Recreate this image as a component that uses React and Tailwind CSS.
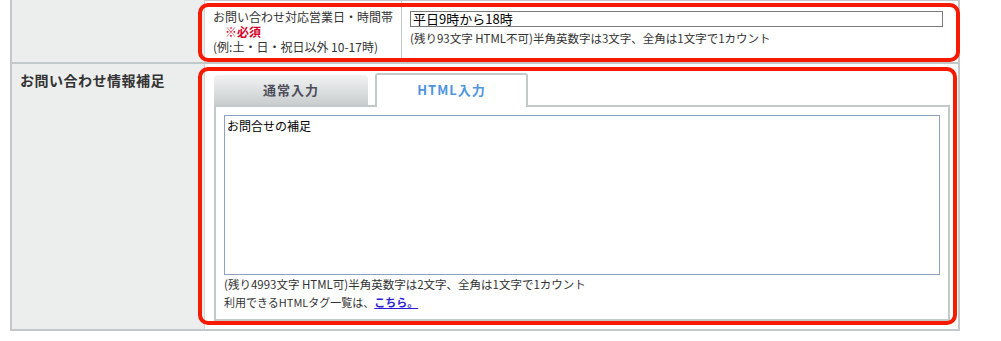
export default function App() {
  return (
    <div className="relative w-[1001px] h-[341px] bg-white overflow-hidden font-['Noto_Sans_CJK_JP','Noto_Sans',sans-serif] text-[#333]">
      <div className="ml-[10px] w-[950px] border-x-2 border-b-2 border-[#c3c9c9]">
        {/* Row 1 */}
        <div className="flex h-[64px] border-b-2 border-[#c3c9c9]">
          <div className="w-[193px] bg-[#eceeee] border-r border-[#d2d7d7]" />
          <div className="flex-1 flex border-t border-[#c3c9c9]">
            <div className="w-[197px] border-r border-[#c3c9c9] pl-[8px] pt-[8px] text-[12px] leading-[15px]">
              <div>お問い合わせ対応営業日・時間帯</div>
              <div className="pl-[12px] text-[#d4002a] font-bold">※必須</div>
              <div>(例:土・日・祝日以外 10-17時)</div>
            </div>
            <div className="flex-1 pl-[8px] pt-[10px]">
              <div className="w-[533px] h-[16px] border border-[#7a7a7a] text-[13px] leading-[14px] pl-[2px] text-black">
                平日9時から18時
              </div>
              <div className="mt-[4px] text-[11.5px] leading-[15px]">
                (残り93文字 HTML不可)半角英数字は3文字、全角は1文字で1カウント
              </div>
            </div>
          </div>
        </div>
        {/* Row 2 */}
        <div className="flex h-[265px]">
          <div className="w-[193px] bg-[#eceeee] border-r border-[#d2d7d7] pl-[8px] pt-[6px] text-[14px] leading-[20px] font-bold tracking-[0.5px]">
            お問い合わせ情報補足
          </div>
          <div className="flex-1 pl-[9px] pt-[9px]">
            <div className="flex items-end gap-[7px] h-[32px]">
              <div className="w-[154px] h-[30px] rounded-t-[4px] bg-gradient-to-b from-[#f2f4f4] to-[#c9cdcd] flex items-center justify-center text-[13px] font-bold tracking-[1px] text-[#4d4d5c]">
                通常入力
              </div>
              <div className="relative z-10 -mb-[2px] w-[153px] h-[34px] rounded-t-[3px] border-2 border-b-0 border-[#c3c9c9] bg-white flex items-center justify-center pb-[2px] text-[13px] font-bold tracking-[1px] text-[#4f94e0]">
                HTML入力
              </div>
            </div>
            <div className="w-[736px] h-[216px] border-2 border-[#c3c9c9] px-[8px] pt-[8px]">
              <div className="w-[716px] h-[160px] border border-[#8ea2bd] px-[2px] pt-[2px] text-[12px] leading-[16px] text-black">
                お問合せの補足
              </div>
              <div className="text-[11.5px] leading-[18px]">
                (残り4993文字 HTML可)半角英数字は2文字、全角は1文字で1カウント
              </div>
              <div className="text-[11px] leading-[18px]">
                利用できるHTMLタグ一覧は、
                <a href="#" className="text-[#2b1ed6] underline font-bold">こちら。</a>
              </div>
            </div>
          </div>
        </div>
      </div>
      {/* red annotation boxes */}
      <div className="absolute left-[198px] top-[3px] w-[762px] h-[59px] border-4 border-[#f51a00] rounded-[10px] pointer-events-none" />
      <div className="absolute left-[198px] top-[67px] w-[759px] h-[258px] border-4 border-[#f51a00] rounded-[10px] pointer-events-none" />
    </div>
  );
}
